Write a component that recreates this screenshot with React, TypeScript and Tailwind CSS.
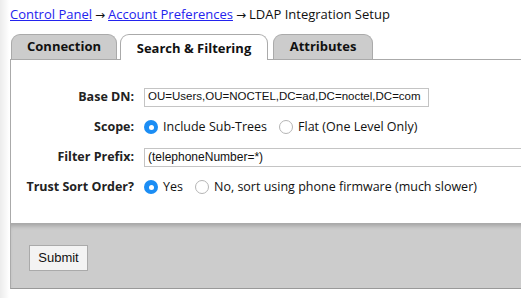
import React from "react";

const font = { fontFamily: '"Open Sans", "Noto Sans", sans-serif' };
const mono = { fontFamily: '"Liberation Sans", Arial, sans-serif' };

function Radio({ checked }: { checked?: boolean }) {
  return checked ? (
    <span className="flex size-[14px] shrink-0 items-center justify-center rounded-full bg-[#1b8df4]">
      <span className="size-[5px] rounded-full bg-white" />
    </span>
  ) : (
    <span className="size-[14px] shrink-0 rounded-full border border-[#b5b5b5] bg-white" />
  );
}

function Row({ label, children }: { label: string; children: React.ReactNode }) {
  return (
    <div className="flex h-[30px] items-center">
      <div className="w-[123px] shrink-0 text-right text-[12.5px] font-bold text-[#222]">{label}</div>
      <div className="ml-[10px] flex min-w-0 flex-1 items-center">{children}</div>
    </div>
  );
}

function Tab({ label, active, w }: { label: string; active?: boolean; w: string }) {
  return (
    <div
      className={
        "flex h-[25px] items-center justify-center rounded-t-[9px] border border-b-0 border-[#aaa] text-[13px] font-bold text-[#111] " +
        w +
        (active ? " relative -mb-px h-[26px] bg-white pt-[2px]" : " bg-[#ccc]")
      }
    >
      {label}
    </div>
  );
}

function Arrow() {
  return <span className="mx-[3px] text-[12px]" style={{ fontFamily: '"DejaVu Sans", sans-serif' }}>→</span>;
}

export default function App() {
  return (
    <div
      className="h-[298px] w-[521px] overflow-hidden bg-[linear-gradient(to_right,#ececec,#fafafa_7px,#fff_9px)] text-[#111]"
      style={font}
    >
      <div className="pl-[10px] pt-[4px] text-[13px] leading-[20px]">
        <a className="text-[#2323ee] underline">Control Panel</a>
        <Arrow />
        <a className="text-[#2323ee] underline">Account Preferences</a>
        <Arrow />
        LDAP Integration Setup
      </div>

      <div className="ml-[10px] mt-[9px] w-[540px]">
        <div className="flex items-end pl-[1px]">
          <Tab label="Connection" w="w-[106px]" />
          <div className="w-[3px]" />
          <Tab label="Search & Filtering" active w="w-[148px]" />
          <div className="w-[5px]" />
          <Tab label="Attributes" w="w-[100px]" />
        </div>

        <div className="border border-[#aaa] border-b-[#999]">
          <div className="bg-white pb-[21px] pt-[22px]">
            <Row label="Base DN:">
              <div className="flex h-[19px] w-[285px] items-center border border-[#c4c4c4] px-[3px] text-[11.5px] text-[#111]" style={mono}>
                OU=Users,OU=NOCTEL,DC=ad,DC=noctel,DC=com
              </div>
            </Row>
            <Row label="Scope:">
              <label className="flex items-center gap-[5px] text-[12.5px]">
                <Radio checked />
                Include Sub-Trees
              </label>
              <label className="ml-[12px] flex items-center gap-[5px] text-[12.5px]">
                <Radio />
                Flat (One Level Only)
              </label>
            </Row>
            <Row label="Filter Prefix:">
              <div className="flex h-[19px] flex-1 items-center border border-[#c4c4c4] px-[3px] text-[12px] text-[#111]" style={mono}>
                (telephoneNumber=*)
              </div>
            </Row>
            <Row label="Trust Sort Order?">
              <label className="flex items-center gap-[5px] text-[12.5px]">
                <Radio checked />
                Yes
              </label>
              <label className="ml-[12px] flex items-center gap-[5px] text-[12.5px]">
                <Radio />
                No, sort using phone firmware (much slower)
              </label>
            </Row>
          </div>
          <div className="h-[65px] border-t border-[#aaa] bg-[#ccc] pl-[18px] pt-[20px] shadow-[inset_0_4px_4px_-2px_rgba(0,0,0,0.2)]">
            <button className="h-[26px] w-[59px] border border-[#aaa] bg-[#f3f3f3] text-[13px] text-[#111]" style={mono}>
              Submit
            </button>
          </div>
        </div>
      </div>
    </div>
  );
}
